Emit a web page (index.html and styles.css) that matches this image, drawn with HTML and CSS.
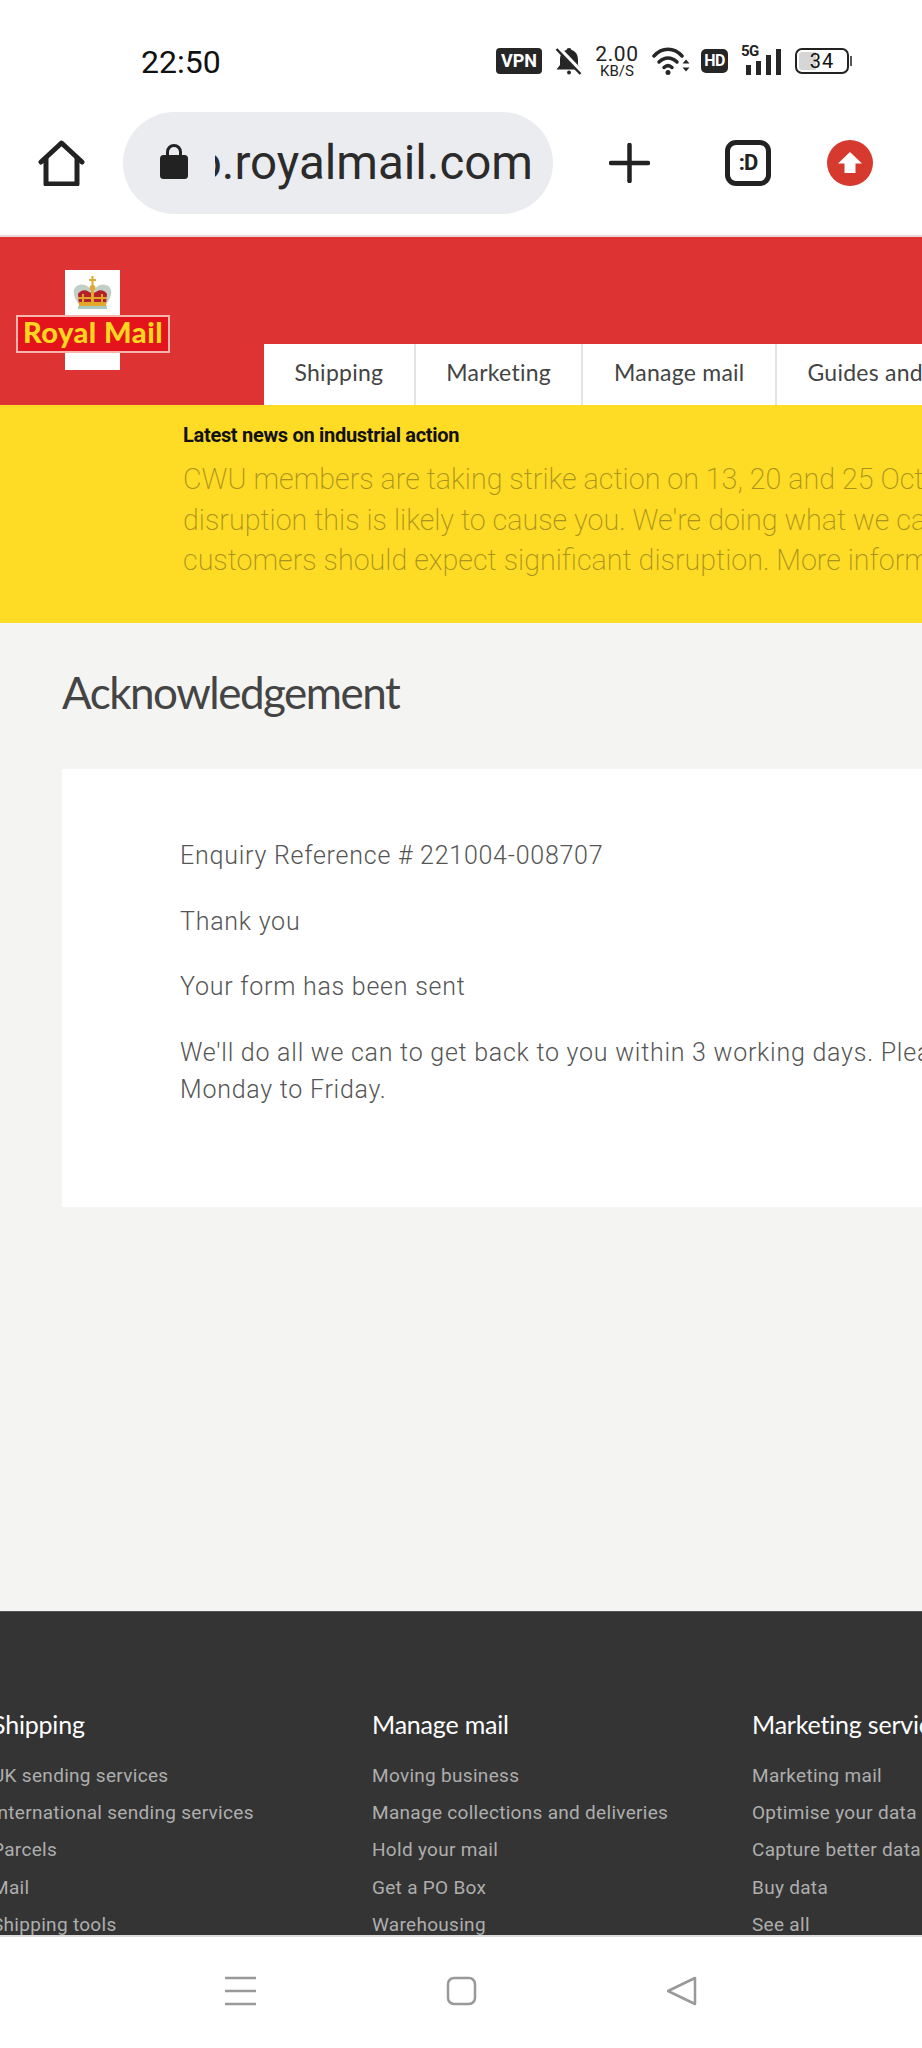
FILE: index.html
```html
<!DOCTYPE html>
<html lang="en">
<head>
<meta charset="utf-8">
<title>Royal Mail - Acknowledgement</title>
<link rel="stylesheet" href="styles.css">
</head>
<body>
<div class="phone">
  <div class="status">
    <span class="clock">22:50</span>
    <div class="status-icons">
      <span class="pill-vpn">VPN</span>
      <svg class="ic-bell" viewBox="0 0 28 28"><path fill="#262626" d="M14 1c1.500 0 2.300.9 2.500 2C21 4.300 23 8 23 13v5l3.500 4.500H1.500L5 18v-5c0-5 2-8.700 6.500-10C11.700 1.900 12.500 1 14 1z"/><circle cx="14" cy="25.500" r="2" fill="#262626"/><path d="M3 1l24 25" stroke="#fff" stroke-width="5"/><path d="M1.500 2l24 25" stroke="#262626" stroke-width="2.500"/></svg>
      <div class="speed"><span class="speed-num">2.00</span><span class="speed-unit">KB/S</span></div>
      <svg class="ic-wifi" viewBox="0 0 38 28" fill="none" stroke="#262626" stroke-width="3.500" stroke-linecap="round"><path d="M2 9c8-9 20-9 28 0"/><path d="M7 15c5.500-5.500 12.500-5.500 18 0"/><path d="M12 20.500c2.500-2.500 5.500-2.500 8 0"/><circle cx="16" cy="25.500" r="2.500" fill="#262626" stroke="none"/><path d="M30.500 16.500l3.500-4 3.500 4zM30.500 20.500l3.500 4 3.500-4z" fill="#262626" stroke="none"/></svg>
      <span class="pill-hd">HD</span>
      <div class="signal">
        <span class="five-g">5G</span>
        <svg class="ic-bars" viewBox="0 0 38 26"><rect x="3" y="16" width="5" height="10" fill="#262626"/><rect x="13" y="12" width="5" height="14" fill="#262626"/><rect x="23" y="6" width="5" height="20" fill="#262626"/><rect x="33" y="0" width="5" height="26" fill="#262626"/></svg>
      </div>
      <div class="battery"><span class="battery-fill"></span><span class="battery-num">34</span></div>
      <span class="battery-nub"></span>
    </div>
  </div>

  <div class="toolbar">
    <svg class="ic-home" viewBox="0 0 47 46" fill="none" stroke="#222" stroke-width="5" stroke-linejoin="round" stroke-linecap="round"><path d="M3 22L23.500 3 44 22"/><path d="M8 19v25h31V19"/></svg>
    <div class="urlbar">
      <svg class="ic-lock" viewBox="0 0 28 36"><path d="M7.500 14V9a6.500 6.500 0 0 1 13 0v5" fill="none" stroke="#222" stroke-width="3"/><rect x="0" y="12" width="28" height="24" rx="3.500" fill="#222"/></svg>
      <div class="url"><span>o.royalmail.com</span></div>
    </div>
    <svg class="ic-plus" viewBox="0 0 41 40" stroke="#222" stroke-width="4.500" stroke-linecap="round"><path d="M20.500 2v36M2 20h37"/></svg>
    <div class="tabs-btn">:D</div>
    <svg class="ic-update" viewBox="0 0 46 46"><circle cx="23" cy="23" r="23" fill="#d63a2f"/><path d="M23 12L35 23.500h-6.500V33h-11V23.500H11z" fill="#fff"/></svg>
  </div>

  <header class="site-head">
    <svg class="logo" viewBox="0 0 154 100">
      <rect x="49" y="0" width="55" height="100" fill="#fff"/>
      <g>
        <path d="M58 25c-2-8 5-12 11-10 3 1 5 3 6 5l-2 15h-9c-3-3-5-6-6-10zM95 25c2-8-5-12-11-10-3 1-5 3-6 5l2 15h9c3-3 5-6 6-10z" fill="#c3cfc6"/>
        <path d="M63 35l-1-11c2-4 8-5 11-2l3 1h1l3-1c3-3 9-2 11 2l-1 11z" fill="#b3222a"/>
        <path d="M62 27h29v2H62zM75 19h3v16h-3zM66 24h2v11h-2zM85 24h2v11h-2z" fill="#e3a72c"/>
        <path d="M63 32h27v4H63z" fill="#e3a72c"/>
        <path d="M75.500 6h2v11h-2zM73 9h7v2h-7z" fill="#dfa93a"/>
        <circle cx="76.500" cy="18" r="3" fill="#dfa93a"/>
        <path d="M62 36h29v3H62z" fill="#a9c9c2"/>
      </g>
      <rect x="1" y="46" width="152" height="36" fill="#e3141c" stroke="#f6b6b0" stroke-width="2"/>
      <text class="logo-text" x="77" y="73" text-anchor="middle">Royal Mail</text>
    </svg>
    <nav class="site-nav">
      <a class="nav-item">Shipping</a>
      <a class="nav-item">Marketing</a>
      <a class="nav-item">Manage mail</a>
      <a class="nav-item">Guides and support</a>
    </nav>
  </header>

  <section class="notice">
    <h2 class="notice-title">Latest news on industrial action</h2>
    <p class="notice-body">CWU members are taking strike action on 13, 20 and 25 October. We apologise for the<br>disruption this is likely to cause you. We're doing what we can to keep services running but<br>customers should expect significant disruption. More information is available on our website.</p>
  </section>

  <main class="content">
    <h1 class="page-title">Acknowledgement</h1>
    <div class="card">
      <p class="msg">Enquiry Reference # 221004-008707</p>
      <p class="msg">Thank you</p>
      <p class="msg">Your form has been sent</p>
      <p class="msg">We'll do all we can to get back to you within 3 working days. Please note our opening hours are<br>Monday to Friday.</p>
    </div>
  </main>

  <footer class="site-foot">
    <div class="foot-col">
      <h3 class="foot-head">Shipping</h3>
      <a class="foot-link">UK sending services</a>
      <a class="foot-link">International sending services</a>
      <a class="foot-link">Parcels</a>
      <a class="foot-link">Mail</a>
      <a class="foot-link">Shipping tools</a>
    </div>
    <div class="foot-col">
      <h3 class="foot-head">Manage mail</h3>
      <a class="foot-link">Moving business</a>
      <a class="foot-link">Manage collections and deliveries</a>
      <a class="foot-link">Hold your mail</a>
      <a class="foot-link">Get a PO Box</a>
      <a class="foot-link">Warehousing</a>
    </div>
    <div class="foot-col">
      <h3 class="foot-head">Marketing services</h3>
      <a class="foot-link">Marketing mail</a>
      <a class="foot-link">Optimise your data</a>
      <a class="foot-link">Capture better data</a>
      <a class="foot-link">Buy data</a>
      <a class="foot-link">See all</a>
    </div>
  </footer>

  <div class="sysnav">
    <svg class="nav-ic" viewBox="0 0 31 30" stroke="#999" stroke-width="2.500"><path d="M0 2h31M0 15h31M0 28h31"/></svg>
    <svg class="nav-ic" viewBox="0 0 31 30" fill="none" stroke="#999" stroke-width="2.500"><rect x="2" y="2" width="27" height="26" rx="6"/></svg>
    <svg class="nav-ic" viewBox="0 0 31 30" fill="none" stroke="#999" stroke-width="2.500" stroke-linejoin="round"><path d="M28 2v26L1 15z"/></svg>
  </div>
</div>
</body>
</html>
```
FILE: styles.css
```css
* { box-sizing: border-box; }
html, body { margin: 0; padding: 0; background: #fff; }
.phone {
  width: 922px;
  height: 2048px;
  overflow: hidden;
  display: flex;
  flex-direction: column;
  font-family: Roboto, "Liberation Sans", sans-serif;
}

/* status bar */
.status {
  height: 112px;
  flex: none;
  display: flex;
  align-items: flex-start;
  padding: 44px 0 0 141px;
}
.clock { font-size: 32px; line-height: 36px; color: #111; width: 355px; flex: none; }
.status-icons { display: flex; align-items: center; height: 30px; margin-top: 2px; }
.pill-vpn {
  width: 46px; height: 26px; border-radius: 4px; background: #262626; color: #fff;
  font: 700 18px/26px Roboto, sans-serif; text-align: center;
}
.ic-bell { width: 28px; height: 28px; margin-left: 13px; }
.speed { display: flex; flex-direction: column; align-items: center; width: 44px; margin-left: 12px; color: #222; margin-top: 1px; }
.speed-num { font-size: 21px; line-height: 19px; letter-spacing: .6px; }
.speed-unit { font-size: 15px; line-height: 15px; }
.ic-wifi { width: 38px; height: 28px; margin-left: 13px; }
.pill-hd {
  width: 27px; height: 24px; border-radius: 5px; background: #262626; color: #fff;
  font: 700 16px/24px Roboto, sans-serif; text-align: center; margin-left: 11px; letter-spacing: -.5px;
}
.signal { position: relative; width: 40px; height: 28px; margin-left: 13px; }
.five-g { position: absolute; left: 0; top: -3px; font: 700 15px/15px Roboto, sans-serif; color: #222; letter-spacing: -.5px; }
.ic-bars { position: absolute; right: 0; top: 2px; width: 38px; height: 26px; }
.battery {
  position: relative; width: 54px; height: 26px; margin-left: 14px;
  border: 2px solid #222; border-radius: 7px; overflow: hidden;
}
.battery-fill { position: absolute; left: 2px; top: 2px; bottom: 2px; width: 17px; background: #d6d6d6; border-radius: 3px 0 0 3px; }
.battery-num { position: relative; display: block; text-align: center; font-size: 20px; line-height: 22px; color: #111; letter-spacing: 1px; }
.battery-nub { width: 2px; height: 10px; background: #555; margin-left: 1px; }

/* browser toolbar */
.toolbar {
  height: 125px;
  flex: none;
  display: flex;
  align-items: flex-start;
  padding-left: 38px;
  border-bottom: 2px solid #e8d9d7;
}
.ic-home { width: 47px; height: 46px; margin-top: 28px; flex: none; }
.urlbar {
  width: 430px; height: 102px; margin-left: 38px; flex: none;
  background: #ebecf0; border-radius: 51px;
  display: flex; align-items: center; padding-left: 37px;
}
.ic-lock { width: 28px; height: 36px; flex: none; margin-top: -4px; }
.url {
  width: 318px; margin-left: 27px; overflow: hidden; display: flex; justify-content: flex-end;
  font-size: 47.500px; line-height: 60px; color: #2b2b2b; white-space: nowrap; flex: none;
}
.ic-plus { width: 41px; height: 40px; margin: 31px 0 0 56px; flex: none; }
.tabs-btn {
  width: 46px; height: 46px; margin: 28px 0 0 75px; flex: none;
  border: 5px solid #222; border-radius: 11px;
  font: 700 22px/36px Roboto, sans-serif; color: #222; text-align: center; letter-spacing: -1px;
}
.ic-update { width: 46px; height: 46px; margin: 28px 0 0 56px; flex: none; }

/* site header */
.site-head {
  height: 168px; flex: none; background: #dd3333;
  display: flex; align-items: flex-end; padding-left: 16px; overflow: hidden;
}
.logo { width: 154px; height: 100px; flex: none; align-self: flex-start; margin-top: 33px; }
.logo-text { font: 900 29px Lato, sans-serif; fill: #ffd721; letter-spacing: .5px; }
.site-nav { display: flex; flex: none; margin-left: 94px; height: 61px; background: #fff; }
.nav-item {
  padding: 0 30.500px; font-size: 23px; line-height: 56px; color: #444;
  font-family: Lato, sans-serif; letter-spacing: .25px; white-space: nowrap;
  border-right: 2px solid #e4e4e4;
}

/* notice */
.notice { height: 218px; flex: none; background: #fedb24; padding: 17px 0 0 183px; overflow: hidden; }
.notice-title { margin: 0; font-size: 20px; line-height: 26px; font-weight: 700; color: #111; letter-spacing: -.3px; }
.notice-body { margin: 11px 0 0; font-size: 28.700px; line-height: 40.500px; font-weight: 200; color: #ab9220; white-space: nowrap; }

/* content */
.content { height: 988px; flex: none; background: #f4f4f2; padding-left: 62px; overflow: hidden; }
.page-title { margin: 0; padding-top: 40px; font: 400 44px/58px Lato, sans-serif; color: #444; letter-spacing: -1.500px; }
.card { margin-top: 48px; width: 1000px; height: 438px; background: #fff; padding: 68px 0 0 118px; }
.msg { margin: 0 0 28.500px; font-size: 25px; line-height: 37px; color: #555; letter-spacing: .75px; white-space: nowrap; font-weight: 300; }

/* footer */
.site-foot {
  height: 324px; flex: none; background: #343434; overflow: hidden;
  display: flex; padding: 94px 0 0; margin-left: 0;
  border-top: 1px solid #555;
}
.foot-col { width: 380px; flex: none; display: flex; flex-direction: column; white-space: nowrap; }
.foot-col:first-child { margin-left: -8px; }
.foot-head { margin: 0 0 14.500px; font: 400 25px/36px Lato, sans-serif; color: #fff; letter-spacing: -.2px; }
.foot-link { font-size: 19px; line-height: 37.400px; color: #aeaeae; letter-spacing: .3px; }

/* system nav */
.sysnav {
  flex: 1; background: #fff; border-top: 2px solid #dcdcdc;
  display: flex; align-items: flex-start; padding: 39px 0 0 225px; gap: 190px;
}
.nav-ic { width: 31px; height: 30px; flex: none; }
```
